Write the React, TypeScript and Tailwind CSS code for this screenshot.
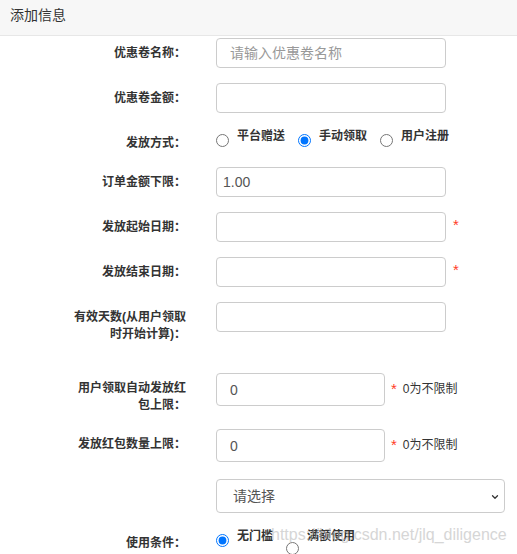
import { ChevronDown } from "lucide-react";

const font = "font-['Liberation_Sans','Noto_Sans_CJK_SC',sans-serif]";

function Label({ text }: { text: string }) {
  return (
    <div className="w-[116px] shrink-0 pt-[7px] text-right text-[12px] font-bold leading-[17px] text-[#333]">
      {text}
    </div>
  );
}

function Star({ className = "" }: { className?: string }) {
  return <span className={`text-[15px] leading-none text-[#ff3b1f] ${className}`}>*</span>;
}

function Radio({ label, checked, className = "" }: { label: string; checked?: boolean; className?: string }) {
  return (
    <label className="flex items-start">
      <input
        type="radio"
        readOnly
        checked={!!checked}
        className={`m-0 mt-[6px] h-[13px] w-[13px] ${className}`}
      />
      <span className="ml-[8px] text-[12px] font-bold leading-[17px] text-[#333]">{label}</span>
    </label>
  );
}

export default function App() {
  const input = "h-[30px] w-[230px] rounded-[4px] border border-[#ccc] bg-white text-[14px] text-[#555] outline-none";

  return (
    <div className={`relative h-[554px] w-[517px] overflow-hidden bg-white ${font}`}>
      {/* Header */}
      <div className="flex h-[36px] items-center border-b border-[#e7e7e7] bg-[#f7f7f7] px-[10px] pb-[4px] text-[14px] text-[#333]">
        添加信息
      </div>

      <div className="pt-[2px] pl-[70px]">
        <div className="mb-[15px] flex">
          <Label text="优惠卷名称：" />
          <input className={`ml-[30px] px-[13px] placeholder:text-[#999] ${input}`} placeholder="请输入优惠卷名称" />
        </div>

        <div className="mb-[15px] flex">
          <Label text="优惠卷金额：" />
          <input className={`ml-[30px] px-[13px] ${input}`} />
        </div>

        <div className="mb-[15px] flex">
          <Label text="发放方式：" />
          <div className="ml-[30px] flex gap-[13px]">
            <Radio label="平台赠送" />
            <Radio label="手动领取" checked />
            <Radio label="用户注册" />
          </div>
        </div>

        <div className="mb-[15px] flex">
          <Label text="订单金额下限：" />
          <input className={`ml-[30px] px-[6px] ${input}`} defaultValue="1.00" />
        </div>

        <div className="mb-[15px] flex">
          <Label text="发放起始日期：" />
          <input className={`ml-[30px] px-[13px] ${input} border-[#c4c4c4]`} />
          <Star className="ml-[7px] pt-[5px]" />
        </div>

        <div className="mb-[15px] flex">
          <Label text="发放结束日期：" />
          <input className={`ml-[30px] px-[13px] ${input} border-[#c4c4c4]`} />
          <Star className="ml-[7px] pt-[5px]" />
        </div>

        <div className="mb-[30px] flex">
          <Label text="有效天数(从用户领取时开始计算)：" />
          <input className={`ml-[30px] px-[13px] ${input}`} />
        </div>

        <div className="mb-[15px] flex">
          <Label text="用户领取自动发放红包上限：" />
          <input
            className="ml-[30px] h-[33px] w-[169px] rounded-[4px] border border-[#ccc] px-[13px] text-[14px] text-[#555] outline-none"
            defaultValue="0"
          />
          <div className="flex items-start pt-[8px]">
            <Star className="ml-[6px]" />
            <span className="ml-[6px] text-[12px] leading-[17px] text-[#333]">0为不限制</span>
          </div>
        </div>

        <div className="mb-[17px] flex">
          <Label text="发放红包数量上限：" />
          <input
            className="ml-[30px] h-[33px] w-[169px] rounded-[4px] border border-[#ccc] px-[13px] text-[14px] text-[#555] outline-none"
            defaultValue="0"
          />
          <div className="flex items-start pt-[8px]">
            <Star className="ml-[6px]" />
            <span className="ml-[6px] text-[12px] leading-[17px] text-[#333]">0为不限制</span>
          </div>
        </div>

        <div className="mb-[15px] flex">
          <div className="w-[116px] shrink-0" />
          <div className="relative ml-[30px] flex h-[34px] w-[289px] items-center rounded-[4px] border border-[#ccc] pl-[16px] text-[14px] text-[#555]">
            请选择
            <ChevronDown className="absolute right-[4px] top-[12px] h-[10px] w-[10px] text-[#333]" strokeWidth={3} />
          </div>
        </div>

        <div className="flex">
          <Label text="使用条件：" />
          <div className="ml-[30px] flex gap-[13px]">
            <Radio label="无门槛" checked />
            <Radio label="满额使用" className="mt-[14px]" />
          </div>
        </div>
      </div>

      {/* watermark */}
      <div className="pointer-events-none absolute left-[271px] top-[526px] font-['Liberation_Sans',sans-serif] text-[16px] leading-[18px] text-[#bbb] opacity-60">
        https://blog.csdn.net/jlq_diligence
      </div>
    </div>
  );
}
